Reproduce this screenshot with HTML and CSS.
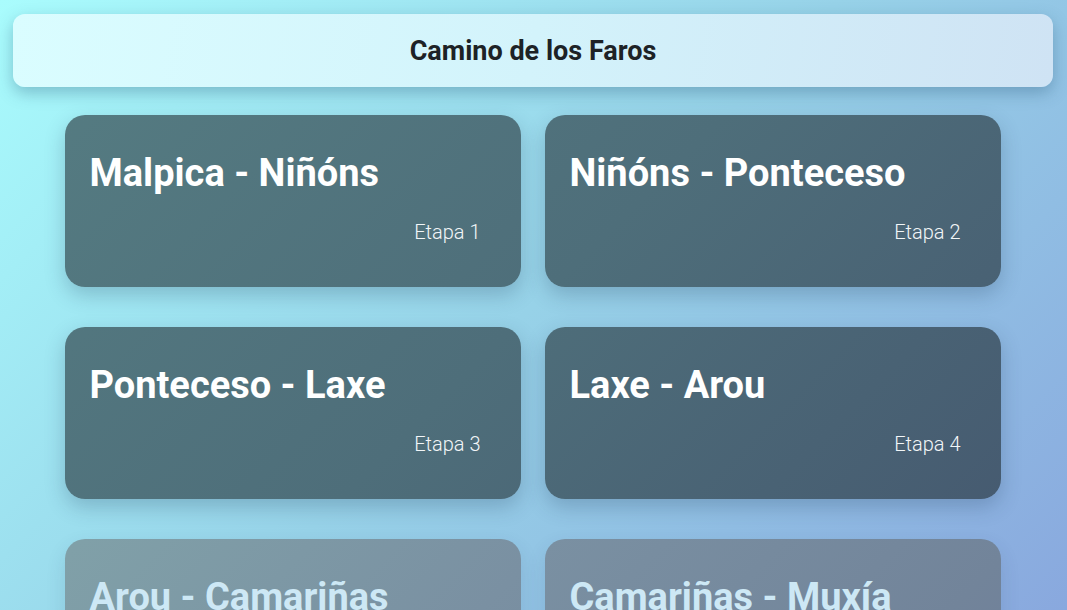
FILE: index.html
```html
<!DOCTYPE html>
<html lang="es">
<head>
<meta charset="utf-8">
<title>Camino de los Faros</title>
<link rel="stylesheet" href="styles.css">
</head>
<body>
<div class="page">
  <header class="topbar">
    <h1 class="topbar-title">Camino de los Faros</h1>
  </header>
  <main class="grid">
    <article class="card">
      <h2 class="card-title">Malpica - Niñóns</h2>
      <p class="card-stage">Etapa 1</p>
    </article>
    <article class="card">
      <h2 class="card-title">Niñóns - Ponteceso</h2>
      <p class="card-stage">Etapa 2</p>
    </article>
    <article class="card">
      <h2 class="card-title">Ponteceso - Laxe</h2>
      <p class="card-stage">Etapa 3</p>
    </article>
    <article class="card">
      <h2 class="card-title">Laxe - Arou</h2>
      <p class="card-stage">Etapa 4</p>
    </article>
    <article class="card card-faded">
      <h2 class="card-title">Arou - Camariñas</h2>
      <p class="card-stage">Etapa 5</p>
    </article>
    <article class="card card-faded">
      <h2 class="card-title">Camariñas - Muxía</h2>
      <p class="card-stage">Etapa 6</p>
    </article>
  </main>
</div>
</body>
</html>
```

FILE: styles.css
```css
html, body {
  margin: 0;
  padding: 0;
  height: 100%;
  overflow: hidden;
}
body {
  font-family: Roboto, "Liberation Sans", sans-serif;
  background: linear-gradient(135deg, #a9fcfd 0%, #97d2e8 50%, #89a8de 100%);
  background-attachment: fixed;
  color: #fff;
}
.page {
  padding: 14px 14px 0 13px;
}
.topbar {
  height: 73px;
  border-radius: 12px;
  background: linear-gradient(100deg, #dafdff 0%, #d3f3fb 50%, #cfe3f4 100%);
  box-shadow: 0 6px 16px rgba(40, 90, 120, 0.35);
  display: flex;
  align-items: center;
  justify-content: center;
}
.topbar-title {
  margin: 0;
  font-size: 27px;
  font-weight: 700;
  color: #1d2226;
}
.grid {
  display: grid;
  grid-template-columns: 456px 456px;
  column-gap: 24px;
  row-gap: 40px;
  justify-content: center;
  margin-top: 28px;
  margin-left: -1px;
}
.card {
  height: 172px;
  box-sizing: border-box;
  border-radius: 20px;
  padding: 30px 40px 0 25px;
  background: linear-gradient(135deg, #567e83 0%, #4e6e7a 50%, #44566e 100%);
  background-attachment: fixed;
  box-shadow: 0 8px 20px rgba(30, 60, 90, 0.25);
}
.card-title {
  margin: 0;
  font-size: 38px;
  font-weight: 700;
  line-height: 56px;
  color: #fff;
}
.card-stage {
  margin: 19px 0 0;
  text-align: right;
  font-size: 20px;
  font-weight: 300;
  color: #f2f6f8;
}
.card-faded {
  background: linear-gradient(135deg, #88b0b0 0%, #80a0a8 37%, #7a90a2 65%, #72849a 93%, #70809a 100%);
  background-attachment: fixed;
  box-shadow: 0 8px 20px rgba(30, 60, 90, 0.12);
}
.card-faded .card-title {
  color: #cde8f5;
}
.card-faded .card-stage {
  color: #cde8f5;
}
```
